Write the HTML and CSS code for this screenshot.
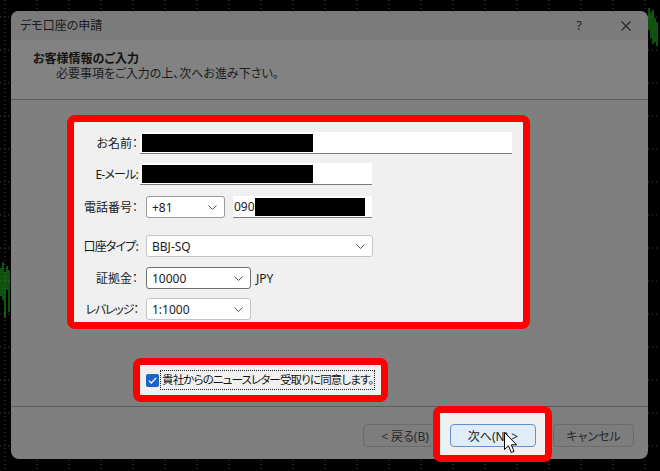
FILE: index.html
```html
<!DOCTYPE html>
<html lang="ja">
<head>
<meta charset="utf-8">
<title>デモ口座の申請</title>
<link rel="stylesheet" href="styles.css">
</head>
<body>
<svg class="chart" width="660" height="471" viewBox="0 0 660 471">
  <g class="grid-v">
    <line x1="5" y1="0" x2="5" y2="471"/><line x1="37" y1="0" x2="37" y2="471"/><line x1="69" y1="0" x2="69" y2="471"/>
    <line x1="101" y1="0" x2="101" y2="471"/><line x1="133" y1="0" x2="133" y2="471"/><line x1="165" y1="0" x2="165" y2="471"/>
    <line x1="197" y1="0" x2="197" y2="471"/><line x1="229" y1="0" x2="229" y2="471"/><line x1="261" y1="0" x2="261" y2="471"/>
    <line x1="293" y1="0" x2="293" y2="471"/><line x1="325" y1="0" x2="325" y2="471"/><line x1="357" y1="0" x2="357" y2="471"/>
    <line x1="389" y1="0" x2="389" y2="471"/><line x1="421" y1="0" x2="421" y2="471"/><line x1="453" y1="0" x2="453" y2="471"/>
    <line x1="485" y1="0" x2="485" y2="471"/><line x1="517" y1="0" x2="517" y2="471"/><line x1="549" y1="0" x2="549" y2="471"/>
    <line x1="581" y1="0" x2="581" y2="471"/><line x1="613" y1="0" x2="613" y2="471"/><line x1="645" y1="0" x2="645" y2="471"/>
  </g>
  <g class="grid-h">
    <line x1="0" y1="17" x2="660" y2="17"/><line x1="0" y1="50" x2="660" y2="50"/><line x1="0" y1="83" x2="660" y2="83"/>
    <line x1="0" y1="116" x2="660" y2="116"/><line x1="0" y1="149" x2="660" y2="149"/><line x1="0" y1="182" x2="660" y2="182"/>
    <line x1="0" y1="215" x2="660" y2="215"/><line x1="0" y1="248" x2="660" y2="248"/><line x1="0" y1="281" x2="660" y2="281"/>
    <line x1="0" y1="314" x2="660" y2="314"/><line x1="0" y1="347" x2="660" y2="347"/><line x1="0" y1="380" x2="660" y2="380"/>
    <line x1="0" y1="413" x2="660" y2="413"/><line x1="0" y1="446" x2="660" y2="446"/>
  </g>
  <g class="ticks">
    <line x1="649" y1="8" x2="649" y2="30"/><line x1="651" y1="12" x2="651" y2="38"/><line x1="653" y1="10" x2="653" y2="44"/>
    <line x1="655" y1="18" x2="655" y2="42"/><line x1="657" y1="22" x2="657" y2="46"/>
    <line x1="1" y1="268" x2="1" y2="296"/><line x1="3" y1="262" x2="3" y2="300"/><line x1="5" y1="272" x2="5" y2="318"/>
    <line x1="7" y1="266" x2="7" y2="290"/><line x1="9" y1="270" x2="9" y2="312"/>
  </g>
</svg>

<div class="dialog">
  <div class="titlebar">
    <span class="title">デモ口座の申請</span>
    <span class="help">?</span>
    <svg class="close" width="10" height="10" viewBox="0 0 10 10"><path d="M0.5 0.5L9.5 9.5M9.5 0.5L0.5 9.5"/></svg>
  </div>

  <div class="header">
    <div class="h-title">お客様情報のご入力</div>
    <div class="h-sub">必要事項をご入力の上、次へお進み下さい。</div>
  </div>

  <div class="content">
    <div class="mark form-mark">
      <div class="row r-name">
        <span class="lbl">お名前：</span>
        <span class="edit w-name"><span class="redact r1"></span></span>
      </div>
      <div class="row r-mail">
        <span class="lbl kana">E-メール:</span>
        <span class="edit w-mail"><span class="redact r1"></span></span>
      </div>
      <div class="row r-tel">
        <span class="lbl">電話番号：</span>
        <span class="combo w-code"><span class="val">+81</span><svg class="chev" width="9" height="5" viewBox="0 0 9 5"><path d="M0.5 0.5L4.5 4.5L8.5 0.5"/></svg></span>
        <span class="edit w-tel"><span class="val">090</span><span class="redact r2"></span></span>
      </div>
      <div class="row r-type">
        <span class="lbl kana">口座タイプ:</span>
        <span class="combo w-type"><span class="val">BBJ-SQ</span><svg class="chev" width="9" height="5" viewBox="0 0 9 5"><path d="M0.5 0.5L4.5 4.5L8.5 0.5"/></svg></span>
      </div>
      <div class="row r-dep">
        <span class="lbl">証拠金：</span>
        <span class="combo w-small dark"><span class="val">10000</span><svg class="chev" width="9" height="5" viewBox="0 0 9 5"><path d="M0.5 0.5L4.5 4.5L8.5 0.5"/></svg></span>
        <span class="unit">JPY</span>
      </div>
      <div class="row r-lev">
        <span class="lbl kana-tight">レバレッジ：</span>
        <span class="combo w-small"><span class="val">1:1000</span><svg class="chev" width="9" height="5" viewBox="0 0 9 5"><path d="M0.5 0.5L4.5 4.5L8.5 0.5"/></svg></span>
      </div>
    </div>

    <div class="mark check-mark">
      <span class="checkbox"><svg width="9" height="7" viewBox="0 0 9 7"><path d="M0.8 3.6L3.3 6L8.2 0.9"/></svg></span>
      <span class="check-text">貴社からのニュースレター受取りに同意します。</span>
    </div>
  </div>

  <div class="footer">
    <button class="btn back">&lt; 戻る(B)</button>
    <button class="btn next">次へ(N) &gt;</button>
    <button class="btn cancel">キャンセル</button>
    <div class="mark next-mark"></div>
    <svg class="cursor" width="14" height="22" viewBox="0 0 14 22"><path d="M0.5 0.5V17.5L4.5 13.8L7.3 20.5L10 19.3L7.3 12.8H12.6Z"/></svg>
  </div>
</div>
</body>
</html>
```

FILE: styles.css
```css
html, body {
  margin: 0;
  padding: 0;
}

body {
  width: 660px;
  height: 471px;
  background: #000;
  position: relative;
  overflow: hidden;
  font-family: "Noto Sans", "Noto Sans CJK JP", sans-serif;
  font-size: 12px;
  font-feature-settings: "palt";
  color: #1a1a1a;
}

/* chart canvas behind the window */
.chart {
  position: absolute;
  left: 0;
  top: 0;
}
.grid-v line,
.grid-h line {
  stroke: #4a4a4a;
  stroke-width: 1;
  stroke-dasharray: 1 3;
}
.ticks line {
  stroke: #1fa51f;
  stroke-width: 1;
}

/* dimmed dialog window */
.dialog {
  position: absolute;
  left: 11px;
  top: 11px;
  width: 637px;
  height: 448px;
  border-radius: 8px;
  background: #7f7f7f;
  display: flex;
  flex-direction: column;
}

.titlebar {
  height: 29px;
  flex: none;
  background: #7b7b7b;
  border-radius: 8px 8px 0 0;
  display: flex;
  align-items: center;
  padding-left: 9px;
  box-sizing: border-box;
}
.title {
  flex: 1;
  color: #1c1c1c;
  line-height: 1;
}
.help {
  width: 12px;
  text-align: center;
  margin-right: 36px;
  color: #202020;
  font-size: 12px;
}
.close {
  margin-right: 17px;
}
.close path {
  stroke: #262626;
  stroke-width: 1.1;
  fill: none;
}

.header {
  height: 59px;
  flex: none;
  background: #828282;
  border-bottom: 1px solid #5c5c5c;
  box-sizing: content-box;
  padding-left: 22px;
}
.h-title {
  font-weight: bold;
  margin-top: 10px;
  line-height: 17px;
  color: #141414;
}
.h-sub {
  margin-left: 23px;
  line-height: 14px;
  margin-top: 0;
  color: #1c1c1c;
}

.content {
  height: 306px;
  flex: none;
  padding-top: 15px;
  box-sizing: border-box;
  display: flex;
  flex-direction: column;
  align-items: flex-start;
}

/* red highlight frames */
.mark {
  border: 7px solid #fe0000;
  border-radius: 8px;
  background: #f0f0f0;
  box-sizing: border-box;
}

.form-mark {
  margin-left: 56px;
  width: 463px;
  height: 214px;
  padding-top: 10px;
}

.row {
  display: flex;
  align-items: center;
  height: 22px;
}
.r-mail { margin-top: 9px; }
.r-tel { margin-top: 11px; }
.r-type { margin-top: 17px; }
.r-dep { margin-top: 10px; }
.r-lev { margin-top: 9px; }

.lbl {
  width: 64px;
  padding-right: 2px;
  text-align: right;
  flex: none;
  color: #1a1a1a;
  white-space: nowrap;
}
.lbl.kana { letter-spacing: -0.8px; }
.lbl.kana-tight { letter-spacing: -1.2px; }
.r-tel .lbl,
.r-type .lbl,
.r-dep .lbl,
.r-lev .lbl {
  margin-right: 6px;
}

.edit {
  height: 22px;
  background: #fff;
  border-bottom: 1px solid #7a7a7a;
  box-sizing: border-box;
  display: flex;
  align-items: center;
  padding-left: 2px;
}
.w-name { width: 372px; }
.w-mail { width: 232px; }
.w-tel {
  width: 139px;
  margin-left: 8px;
  padding-left: 1px;
}

.redact {
  display: block;
  background: #000;
  height: 18px;
}
.r1 { width: 171px; }
.r2 { width: 110px; }

.val {
  color: #1a1a1a;
  white-space: nowrap;
}

.combo {
  height: 22px;
  background: #fff;
  border: 1px solid #c4c4c4;
  border-radius: 3px;
  box-sizing: border-box;
  display: flex;
  align-items: center;
  justify-content: space-between;
  padding: 0 7px 0 5px;
}
.combo.dark { border-color: #6e6e6e; }
.w-code { width: 79px; border-color: #9a9a9a; }
.w-type { width: 227px; }
.w-small { width: 105px; }
.chev path {
  stroke: #555;
  stroke-width: 1;
  fill: none;
}
.unit {
  margin-left: 5px;
  color: #1a1a1a;
}

.check-mark {
  margin-left: 122px;
  margin-top: 29px;
  width: 255px;
  height: 44px;
  display: flex;
  align-items: center;
  padding-left: 6px;
}
.checkbox {
  width: 13px;
  height: 13px;
  border-radius: 2px;
  background: #1b64c4;
  display: flex;
  align-items: center;
  justify-content: center;
  flex: none;
}
.checkbox path {
  stroke: #fff;
  stroke-width: 1.3;
  fill: none;
}
.check-text {
  margin-left: 2px;
  padding: 1px 1px 2px 1px;
  outline: 1px dotted #222;
  outline-offset: 0;
  white-space: nowrap;
  font-size: 11.5px;
  letter-spacing: -0.85px;
  line-height: 15px;
  color: #141414;
}

.footer {
  position: relative;
  flex: 1;
  border-top: 1px solid #5c5c5c;
  display: flex;
  justify-content: flex-end;
  align-items: flex-start;
  padding: 17px 14px 0 0;
}

.btn {
  height: 23px;
  font: inherit;
  font-size: 12px;
  padding: 0;
  border-radius: 4px;
  border: 1px solid #6c6c6c;
  background: #7d7d7d;
  color: #2a2a2a;
}
.back { width: 84px; margin-right: 3px; }
.next {
  width: 86px;
  margin-right: 17px;
  position: relative;
  z-index: 2;
  background: #e0edf8;
  border-color: #5b93cf;
  color: #1a1a1a;
}
.cancel { width: 81px; }

.next-mark {
  position: absolute;
  left: 422px;
  top: -1px;
  width: 119px;
  height: 56px;
  z-index: 1;
}

.cursor {
  position: absolute;
  left: 493px;
  top: 25px;
  z-index: 3;
}
.cursor path {
  fill: #fff;
  stroke: #000;
  stroke-width: 1;
}
```
